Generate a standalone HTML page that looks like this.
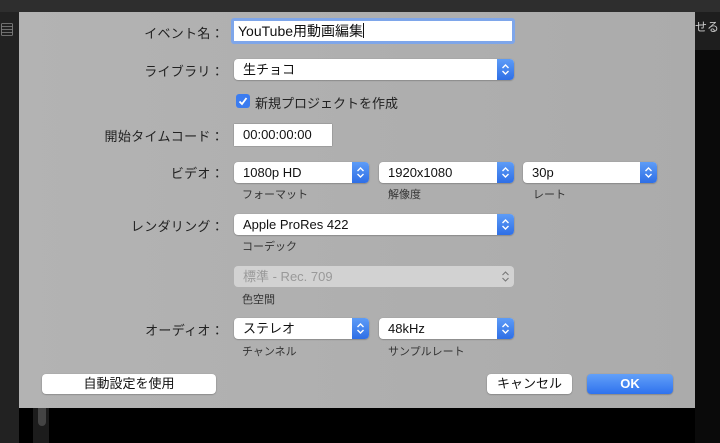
<!DOCTYPE html><html><head><meta charset="utf-8"><style>
body{margin:0;width:720px;height:443px;background:#000;position:relative;overflow:hidden;font-family:"Liberation Sans","Noto Sans CJK JP",sans-serif;}
.a{position:absolute}
.dlg{left:19px;top:12px;width:676px;height:396px;background:linear-gradient(90deg,#b3b3b3,#ababab);}
.lbl{font-size:13px;color:#222;text-align:right;width:200px;left:24px;letter-spacing:0.3px}
.pop{background:#fff;border-radius:4px;height:21px;box-shadow:0 0.5px 1.5px rgba(0,0,0,.35);font-size:13px;color:#111;line-height:21px;box-sizing:border-box;padding-left:9px}
.pop .s{position:absolute;right:0;top:0;width:17px;height:21px;background:linear-gradient(#5d9cf7,#2f6fe6);border-radius:0 4px 4px 0}
.pop .s svg{position:absolute;left:4px;top:4px}
.sub{font-size:11px;color:#333}
.btn{background:#fff;border-radius:4px;height:20px;box-shadow:0 0.5px 1.5px rgba(0,0,0,.35);font-size:13px;text-align:center;line-height:20px;color:#111}
</style></head><body>
<div class="a" style="left:0;top:0;width:720px;height:12px;background:#2e2e2e"></div>
<div class="a" style="left:0;top:12px;width:19px;height:431px;background:#222"></div>
<div class="a" style="left:0;top:20px;width:14px;height:18px;color:#bbb;font-size:14px">▤</div>
<div class="a" style="left:695px;top:12px;width:25px;height:38px;background:#1e1e1e;color:#ccc;font-size:12px;line-height:30px;white-space:nowrap;overflow:hidden">せる</div>
<div class="a" style="left:695px;top:50px;width:25px;height:393px;background:#0a0a0a"></div>
<div class="a" style="left:33px;top:408px;width:16px;height:35px;background:#1c1c1c"></div>
<div class="a" style="left:38px;top:408px;width:8px;height:18px;background:#444;border-radius:0 0 4px 4px"></div>
<div class="a dlg"></div>
<svg width="0" height="0" style="position:absolute"><defs><symbol id="ar" viewBox="0 0 9 13"><path d="M1.5 5 4.5 2 7.5 5M1.5 8 4.5 11 7.5 8" fill="none" stroke="#fff" stroke-width="1.4"/></symbol></defs></svg>

<div class="a lbl" style="top:23px">イベント名：</div>
<div class="a" style="left:231px;top:18px;width:284px;height:26px;border-radius:3px;background:#7ea6ea"></div>
<div class="a" style="left:234px;top:21px;width:278px;height:20px;background:#fff;font-size:14px;line-height:21px;padding-left:4px;box-sizing:border-box;color:#111">YouTube用動画編集<span style="display:inline-block;width:1px;height:15px;background:#111;vertical-align:-2px"></span></div>

<div class="a lbl" style="top:61px">ライブラリ：</div>
<div class="a pop" style="left:234px;top:59px;width:280px">生チョコ<div class="s"><svg width="9" height="13"><use href="#ar"/></svg></div></div>

<div class="a" style="left:236px;top:94px;width:14px;height:14px;border-radius:3px;background:#3b7cf0"><svg width="14" height="14"><path d="M3.5 7.5 6 10 10.5 4" fill="none" stroke="#fff" stroke-width="1.8"/></svg></div>
<div class="a" style="left:255px;top:93px;font-size:13px;color:#222">新規プロジェクトを作成</div>

<div class="a lbl" style="top:126px">開始タイムコード：</div>
<div class="a" style="left:234px;top:124px;width:98px;height:22px;background:#fff;box-shadow:0 0 1px rgba(0,0,0,.5);font-size:13px;line-height:22px;padding-left:9px;box-sizing:border-box;color:#111">00:00:00:00</div>

<div class="a lbl" style="top:163px">ビデオ：</div>
<div class="a pop" style="left:234px;top:162px;width:135px">1080p HD<div class="s"><svg width="9" height="13"><use href="#ar"/></svg></div></div>
<div class="a pop" style="left:379px;top:162px;width:135px">1920x1080<div class="s"><svg width="9" height="13"><use href="#ar"/></svg></div></div>
<div class="a pop" style="left:523px;top:162px;width:134px">30p<div class="s"><svg width="9" height="13"><use href="#ar"/></svg></div></div>
<div class="a sub" style="left:242px;top:186px">フォーマット</div>
<div class="a sub" style="left:388px;top:186px">解像度</div>
<div class="a sub" style="left:533px;top:186px">レート</div>

<div class="a lbl" style="top:216px">レンダリング：</div>
<div class="a pop" style="left:234px;top:214px;width:280px">Apple ProRes 422<div class="s"><svg width="9" height="13"><use href="#ar"/></svg></div></div>
<div class="a sub" style="left:242px;top:238px">コーデック</div>

<div class="a pop" style="left:234px;top:266px;width:280px;background:#d2d2d2;color:#999;box-shadow:none">標準 - Rec. 709<div class="s" style="background:none"><svg width="9" height="13" viewBox="0 0 9 13"><path d="M1.5 5 4.5 2 7.5 5M1.5 8 4.5 11 7.5 8" fill="none" stroke="#777" stroke-width="1.1"/></svg></div></div>
<div class="a sub" style="left:242px;top:291px">色空間</div>

<div class="a lbl" style="top:320px">オーディオ：</div>
<div class="a pop" style="left:234px;top:318px;width:135px">ステレオ<div class="s"><svg width="9" height="13"><use href="#ar"/></svg></div></div>
<div class="a pop" style="left:379px;top:318px;width:135px">48kHz<div class="s"><svg width="9" height="13"><use href="#ar"/></svg></div></div>
<div class="a sub" style="left:242px;top:343px">チャンネル</div>
<div class="a sub" style="left:388px;top:343px">サンプルレート</div>

<div class="a btn" style="left:42px;top:374px;width:174px">自動設定を使用</div>
<div class="a btn" style="left:487px;top:374px;width:85px">キャンセル</div>
<div class="a btn" style="left:587px;top:374px;width:86px;background:linear-gradient(#62a0f8,#2f72ee);color:#fff;font-weight:bold">OK</div>
</body></html>
